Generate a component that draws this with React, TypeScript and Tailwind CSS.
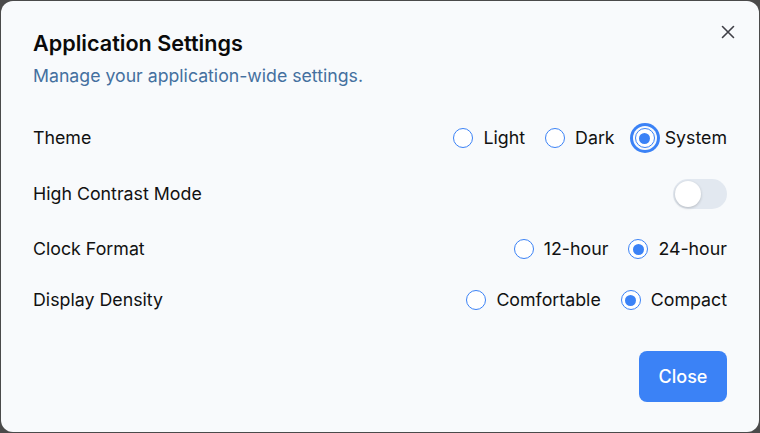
import { useState } from 'react';

type Option = { value: string; label: string };

function Radio({ checked, focused }: { checked: boolean; focused?: boolean }) {
  return (
    <span
      className={
        'flex h-5 w-5 shrink-0 items-center justify-center rounded-full border-[1.5px] border-[#3b82f6] bg-white ' +
        (focused ? 'ring-[3px] ring-[#3b82f6] ring-offset-2 ring-offset-[#f8fafc]' : '')
      }
    >
      {checked && <span className="h-[11px] w-[11px] rounded-full bg-[#3b82f6]" />}
    </span>
  );
}

function RadioGroup({
  options,
  value,
  focused,
  onChange,
}: {
  options: Option[];
  value: string;
  focused?: boolean;
  onChange: (v: string) => void;
}) {
  return (
    <div className="flex items-center gap-5">
      {options.map((o) => (
        <label key={o.value} className="flex cursor-pointer items-center gap-[10px]" onClick={() => onChange(o.value)}>
          <Radio checked={value === o.value} focused={focused && value === o.value} />
          <span className="text-[17.8px] leading-6 text-[#111111]">{o.label}</span>
        </label>
      ))}
    </div>
  );
}

export default function App() {
  const [theme, setTheme] = useState('system');
  const [contrast, setContrast] = useState(false);
  const [clock, setClock] = useState('24');
  const [density, setDensity] = useState('compact');

  return (
    <div className="h-[433px] w-[760px] bg-[#4a4a4a] p-px" style={{ fontFamily: 'Inter, "Noto Sans", sans-serif' }}>
      <div className="relative flex h-full w-full flex-col rounded-xl bg-[#f8fafc] px-8 pb-[30px] pt-7">
        <button className="absolute right-[19px] top-[19px] flex h-6 w-6 items-center justify-center text-[#3f3f46]">
          <svg width="14" height="14" viewBox="0 0 14 14" fill="none" stroke="currentColor" strokeWidth="1.6" strokeLinecap="round">
            <path d="M1.5 1.5l11 11M12.5 1.5l-11 11" />
          </svg>
        </button>

        <h2 className="text-[21.6px] font-semibold leading-7 text-[#0a0a0a]">Application Settings</h2>
        <p className="mt-[7px] text-[17.7px] leading-6 text-[#44709f]">Manage your application-wide settings.</p>

        <div className="mt-[35px] flex flex-col">
          <div className="flex h-[30px] items-center justify-between">
            <span className="text-[17.8px] text-[#111111]">Theme</span>
            <RadioGroup
              focused
              value={theme}
              onChange={setTheme}
              options={[
                { value: 'light', label: 'Light' },
                { value: 'dark', label: 'Dark' },
                { value: 'system', label: 'System' },
              ]}
            />
          </div>

          <div className="mt-[26px] flex h-[30px] items-center justify-between">
            <span className="text-[17.8px] text-[#111111]">High Contrast Mode</span>
            <button
              onClick={() => setContrast(!contrast)}
              className={
                'flex h-[30px] w-[54px] items-center rounded-full p-[2px] ' +
                (contrast ? 'justify-end bg-[#3b82f6]' : 'justify-start bg-[#e2e8f0]')
              }
            >
              <span className="h-[26px] w-[26px] rounded-full bg-white shadow-[0_1px_3px_rgba(0,0,0,0.2)]" />
            </button>
          </div>

          <div className="mt-[28px] flex h-6 items-center justify-between">
            <span className="text-[17.8px] text-[#111111]">Clock Format</span>
            <RadioGroup
              value={clock}
              onChange={setClock}
              options={[
                { value: '12', label: '12-hour' },
                { value: '24', label: '24-hour' },
              ]}
            />
          </div>

          <div className="mt-[27px] flex h-6 items-center justify-between">
            <span className="text-[17.8px] text-[#111111]">Display Density</span>
            <RadioGroup
              value={density}
              onChange={setDensity}
              options={[
                { value: 'comfortable', label: 'Comfortable' },
                { value: 'compact', label: 'Compact' },
              ]}
            />
          </div>
        </div>

        <div className="mt-auto flex justify-end">
          <button className="h-[51px] w-[88px] rounded-lg bg-[#3b82f6] text-lg font-medium text-white">Close</button>
        </div>
      </div>
    </div>
  );
}
